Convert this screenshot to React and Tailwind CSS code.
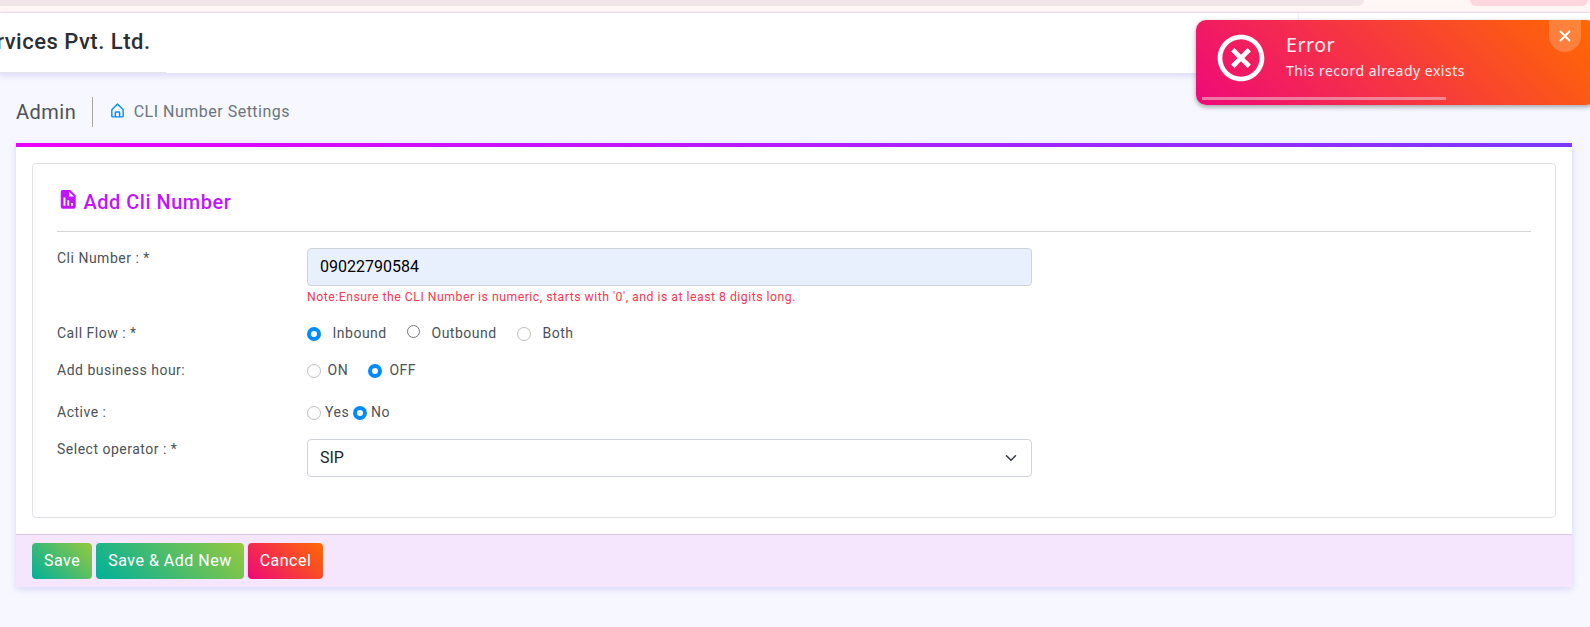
import React from "react";
import { BiHomeAlt, BiXCircle, BiSolidReport, BiX } from "react-icons/bi";

function Radio({ checked, plain, className = "" }) {
  const look = checked
    ? "size-3.5 border-[#008cff] border-4"
    : plain
      ? "size-[13px] border-[#767676] border"
      : "size-3.5 border-[#bfbfbf] border";
  return <span className={`block shrink-0 rounded-full bg-white ${look} ${className}`} />;
}

function Row({ label, className = "", children }) {
  return (
    <div className={`flex ${className}`}>
      <div className="w-[250px] shrink-0 leading-[21px]">{label}</div>
      {children}
    </div>
  );
}

function Header() {
  return (
    <header>
      <div className="flex h-[13px] items-start border-b border-[#f3dcde] bg-[#fff7f5]">
        <div className="h-1.5 w-[1364px] rounded-br-[14px] bg-[#f1e5e9]" />
        <div className="ml-[106px] h-1.5 w-[118px] rounded-b-[14px] bg-[#ffd6de]" />
      </div>
      <div className="relative flex h-[60px] bg-white shadow-[0_2px_6px_rgba(218,218,253,0.65),0_2px_6px_rgba(206,206,238,0.54)]">
        <div className="h-[60px] w-[166px] overflow-hidden border-b border-[#e4e4e4] pr-[15.5px]">
          <div className="flex justify-end">
            <span className="whitespace-nowrap pt-3 text-[22px] font-medium leading-[34px] text-[#2b2f33]">
              rvices Pvt. Ltd.
            </span>
          </div>
        </div>
        <div className="ml-[1132px] h-[60px] w-px bg-[#f0f0f0]" />
      </div>
    </header>
  );
}

function Toast() {
  return (
    <div className="absolute left-[1196px] top-5 h-[85px] w-[400px] rounded-[10px] bg-[linear-gradient(45deg,#ee0979,#ff6a00)] font-['Noto_Sans',sans-serif] text-white shadow-[0_2px_5px_rgba(0,0,0,0.35)]">
      <div className="flex">
        <BiXCircle className="ml-[16.5px] mt-2.5 size-14" />
        <div className="ml-[17.5px] pt-[11px]">
          <div className="text-[19.6px] leading-7 text-white/90">Error</div>
          <div className="text-[14px] leading-[23px] text-white/90">This record already exists</div>
        </div>
      </div>
      <div className="absolute left-1.5 top-[77px] h-[3px] w-[244px] bg-[#eebccb]/60" />
      <div className="absolute left-[353px] top-0 flex h-8 w-8 items-center justify-center rounded-b-2xl bg-white/20">
        <BiX className="size-6" />
      </div>
    </div>
  );
}

export default function App() {
  return (
    <div className="relative h-[627px] w-[1590px] overflow-hidden bg-[#f7f7ff] font-[Roboto,sans-serif] text-[14px] tracking-[0.5px] text-[#4c5258]">
      <Header />

      <div className="ml-4 mt-6 flex h-[30px] items-center">
        <div className="h-[30px] border-r border-[#aaa4a4] pr-4 text-[20px] leading-[30px]">Admin</div>
        <BiHomeAlt className="-mt-1 ml-4 size-[17px] text-[#008cff]" />
        <div className="ml-[7.4px] text-[16px] leading-6 text-[#6c757d]">CLI Number Settings</div>
      </div>

      <main className="mx-4 mt-4 h-[444px] w-[1556px] rounded-b bg-white shadow-[0_2px_6px_rgba(218,218,253,0.65),0_2px_6px_rgba(206,206,238,0.54)]">
        <div className="h-1 bg-[linear-gradient(90deg,#ec00ff,#7c38ff)]" />
        <section className="mx-4 mt-4 h-[355px] rounded border border-[#dee2e6] px-6 pt-6">
          <div className="flex h-11 border-b border-[#d2d4d5]">
            <BiSolidReport className="size-[22.5px] text-[#c314ff]" />
            <h1 className="ml-1 mt-0.5 text-[20px] font-medium leading-6 text-[#c314ff]">Add Cli Number</h1>
          </div>

          <Row label="Cli Number : *" className="mt-4">
            <div>
              <div className="h-[38px] w-[725px] rounded border border-[#ced4da] bg-[#e8f0fe] px-3 text-[16px] leading-9 tracking-normal text-black">
                09022790584
              </div>
              <div className="mt-0.5 text-[12.25px] leading-[18px] text-[#fd3550]">
                Note:Ensure the CLI Number is numeric, starts with '0', and is at least 8 digits long.
              </div>
            </div>
          </Row>

          <Row label="Call Flow : *" className="mt-[17px]">
            <div className="flex h-[22px] leading-[21px]">
              <Radio checked className="mt-[4px]" />
              <span className="ml-[11.5px] w-[74.5px]">Inbound</span>
              <Radio plain className="mt-[2px]" />
              <span className="ml-[11.5px] w-[85.5px]">Outbound</span>
              <Radio className="mt-[4px]" />
              <span className="ml-[11.5px]">Both</span>
            </div>
          </Row>

          <Row label="Add business hour:" className="mt-[15px]">
            <div className="flex h-[22px] leading-[21px]">
              <Radio className="mt-[4px]" />
              <span className="ml-[6.5px] w-[40.5px]">ON</span>
              <Radio checked className="mt-[4px]" />
              <span className="ml-[7.4px]">OFF</span>
            </div>
          </Row>

          <Row label="Active :" className="mt-5">
            <div className="flex h-[22px] leading-[21px]">
              <Radio className="mt-[4px]" />
              <span className="ml-1 w-7">Yes</span>
              <Radio checked className="mt-[4px]" />
              <span className="ml-1">No</span>
            </div>
          </Row>

          <Row label="Select operator : *" className="mt-[15px]">
            <div className="flex h-[38px] w-[725px] items-center justify-between rounded border border-[#ced4da] bg-white pl-3 pr-3.5 text-[16px] tracking-normal text-[#212529]">
              SIP
              <svg className="size-3" viewBox="0 0 16 16" fill="none" stroke="#343a40" strokeWidth="2" strokeLinecap="round" strokeLinejoin="round">
                <path d="m2 5 6 6 6-6" />
              </svg>
            </div>
          </Row>
        </section>

        <footer className="mt-4 flex h-[53px] gap-1 rounded-b border-t border-[#d9c9e3] bg-[#f5e6fe] px-4 pt-2 text-[16px] leading-9 text-white">
          <button className="h-9 w-[60px] rounded bg-[linear-gradient(45deg,#00b09b,#96c93d)]">Save</button>
          <button className="h-9 w-[148px] rounded bg-[linear-gradient(45deg,#00b09b,#96c93d)]">Save &amp; Add New</button>
          <button className="h-9 w-[75px] rounded bg-[linear-gradient(45deg,#ee0979,#ff6a00)]">Cancel</button>
        </footer>
      </main>

      <Toast />
    </div>
  );
}
